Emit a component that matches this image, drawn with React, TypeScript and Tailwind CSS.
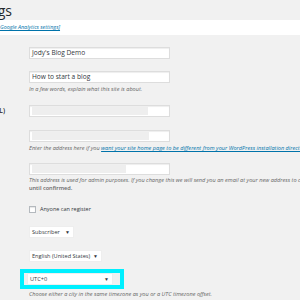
import React from 'react';

const font = { fontFamily: '"Open Sans", "Noto Sans", sans-serif' };

function Field({ value, redact }: { value?: string; redact?: number }) {
  return (
    <div className="h-[12px] w-[141px] border border-[#ddd] bg-white shadow-[inset_0_1px_1px_rgba(0,0,0,0.07)] flex items-center px-[2px] text-[6.6px] text-[#32373c] whitespace-nowrap">
      {value}
      {redact ? <div className="h-[8px] bg-[#eeeeee]" style={{ width: redact }} /> : null}
    </div>
  );
}

function Select({ label, w }: { label: string; w: string }) {
  return (
    <div className={`${w} h-[12px] bg-white border border-[#eee] flex items-center justify-between pl-[2px] pr-[3px] text-[5.6px] text-[#32373c] whitespace-nowrap`}>
      <span>{label}</span>
      <span className="text-[5px]">▼</span>
    </div>
  );
}

function Desc({ children, className = '' }: { children: React.ReactNode; className?: string }) {
  return <p className={`text-[5.6px] italic text-[#666] whitespace-nowrap leading-[8px] ${className}`}>{children}</p>;
}

export default function App() {
  return (
    <div className="w-[300px] h-[300px] overflow-hidden bg-[#f1f1f1]" style={font}>
      {/* page title, cropped on the left */}
      <div className="w-[12px] flex justify-end whitespace-nowrap pt-[4px] h-[20px]">
        <h1 className="text-[14px] leading-[14px] text-[#23282d]">Settings</h1>
      </div>

      {/* notice band */}
      <div className="h-[15px] bg-white flex items-center whitespace-nowrap">
        <a className="text-[5.4px] italic text-[#0073aa] underline">Google Analytics settings]</a>
      </div>

      <div className="pl-[29px]">
        <div className="mt-[12px]"><Field value="Jody's Blog Demo" /></div>
        <div className="mt-[12px]"><Field value="How to start a blog" /></div>
        <Desc className="mt-[2px]">In a few words, explain what this site is about.</Desc>

        <div className="mt-[12px] relative">
          <div className="absolute left-[-29px] w-[5px] top-0 h-[12px] flex items-center justify-end whitespace-nowrap text-[6.6px] font-semibold text-[#23282d]">
            WordPress Address (URL)
          </div>
          <Field redact={116} />
        </div>
        <div className="mt-[13px]"><Field redact={117} /></div>
        <Desc className="mt-[2px]">
          Enter the address here if you{' '}
          <span className="text-[#0073aa] underline">want your site home page to be different from your WordPress installation directory</span>
        </Desc>

        <div className="mt-[11px]"><Field redact={94} /></div>
        <Desc className="mt-[1px]">
          This address is used for admin purposes. If you change this we will send you an email at your new address to confirm it.
        </Desc>
        <Desc className="not-italic font-semibold text-[#444]">until confirmed.</Desc>

        <label className="mt-[13px] flex items-center gap-[4px] text-[5.5px] text-[#32373c] whitespace-nowrap">
          <span className="w-[7px] h-[7px] border border-[#b4b9be] bg-white shadow-[inset_0_1px_1px_rgba(0,0,0,0.1)]" />
          Anyone can register
        </label>

        <div className="mt-[13px]"><Select label="Subscriber" w="w-[45px]" /></div>
        <div className="mt-[12px]"><Select label="English (United States)" w="w-[73px]" /></div>

        <div className="mt-[7px] ml-[-9px] w-[104px] h-[20px] border-[4px] border-[#00f0ff] flex items-center pl-[3px]">
          <Select label="UTC+0" w="w-[86px]" />
        </div>
        <Desc className="mt-[1px]">Choose either a city in the same timezone as you or a UTC timezone offset.</Desc>
      </div>
    </div>
  );
}
